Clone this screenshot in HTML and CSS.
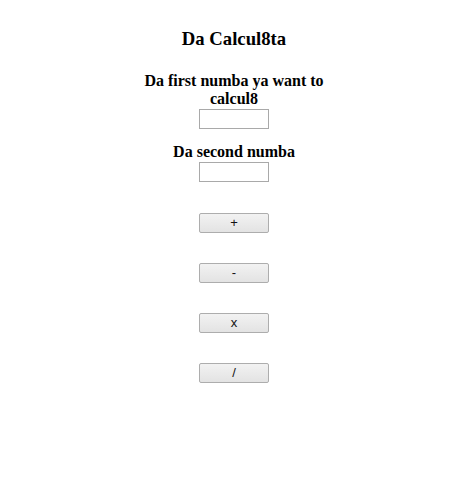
FILE: index.html
```html
<!DOCTYPE html>
<html>
<head>
<meta charset="utf-8">
<link rel="stylesheet" href="styles.css">
</head>
<body>
<main class="calc">
  <h1 class="title">Da Calcul8ta</h1>
  <label class="field">
    <span class="label">Da first numba ya want to calcul8</span>
    <input class="num" type="text">
  </label>
  <label class="field">
    <span class="label">Da second numba</span>
    <input class="num" type="text">
  </label>
  <div class="ops">
    <button class="op">+</button>
    <button class="op">-</button>
    <button class="op">x</button>
    <button class="op">/</button>
  </div>
</main>
</body>
</html>
```
FILE: styles.css
```css
html, body {
  margin: 0;
  padding: 0;
  background: #ffffff;
}
body {
  font-family: "Liberation Serif", "Times New Roman", serif;
  color: #000;
}
.calc {
  width: 200px;
  margin: 0 auto;
  padding: 28px 0 0 2px;
  display: flex;
  flex-direction: column;
  align-items: center;
}
.title {
  font-size: 18.72px;
  font-weight: bold;
  margin: 0 0 22px 0;
  line-height: 22px;
}
.field {
  display: flex;
  flex-direction: column;
  align-items: center;
  margin-bottom: 14px;
}
.label {
  font-size: 16px;
  font-weight: bold;
  text-align: center;
  line-height: 18px;
}
.num {
  width: 70px;
  height: 20px;
  box-sizing: border-box;
  border: 1px solid #a9a9a9;
  padding: 1px 2px;
  margin: 1px 0 0 0;
  background: #fff;
}
.ops {
  display: flex;
  flex-direction: column;
  align-items: center;
  gap: 30px;
  margin-top: 17px;
}
.op {
  width: 70px;
  height: 20px;
  box-sizing: border-box;
  border: 1px solid #adadad;
  border-radius: 2px;
  background: linear-gradient(#f2f2f2, #e3e3e3);
  font-family: "Liberation Sans", Arial, sans-serif;
  font-size: 13px;
  color: #111;
  padding: 0;
  margin: 0;
  line-height: 18px;
}
```
